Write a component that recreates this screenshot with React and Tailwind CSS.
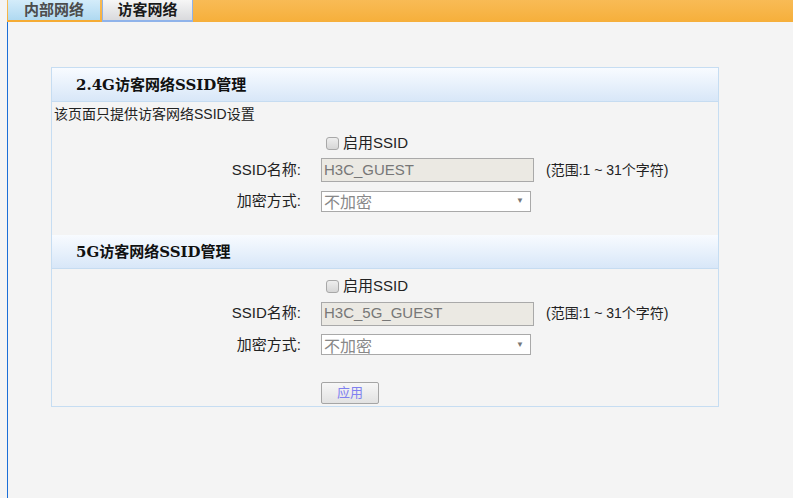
import React from "react";

const sans = { fontFamily: '"Liberation Sans", "Noto Sans CJK SC", sans-serif' };

function Header({ title }) {
  return (
    <div className="h-[34px] flex items-center pl-[24px] pt-[2px] bg-gradient-to-b from-[#f8fbff] to-[#d8e7f8] border-b border-[#c6dcf1]">
      <span
        className="text-[15px] font-bold text-[#111]"
        style={{ fontFamily: '"DejaVu Serif", "Noto Sans CJK SC", serif' }}
      >
        {title}
      </span>
    </div>
  );
}

function Checkbox() {
  return (
    <div className="flex items-center h-[24px] pl-[274px]">
      <span className="w-[13px] h-[13px] rounded-[3px] border border-[#a8a8a8] bg-gradient-to-b from-[#eeeeee] to-[#d6d6d6]"></span>
      <span className="ml-[4px] text-[15px] text-[#222]">启用SSID</span>
    </div>
  );
}

function Row({ label, children, className = "" }) {
  return (
    <div className={"flex items-center " + className}>
      <div className="w-[250px] text-right text-[15px] text-[#222] pr-[1px]">{label}</div>
      <div className="ml-[19px] flex items-center">{children}</div>
    </div>
  );
}

function SsidInput({ value }) {
  return (
    <>
      <div className="w-[213px] h-[24px] border border-[#a9a9a9] bg-[#ebe9e3] flex items-center pl-[2px] text-[15px] text-[#777]">
        {value}
      </div>
      <span className="ml-[12px] text-[14px] text-[#222]">(范围:1 ~ 31个字符)</span>
    </>
  );
}

function Select() {
  return (
    <div className="w-[210px] h-[21px] border border-[#a9a9a9] bg-white flex items-center pl-[2px] pr-[6px]">
      <span className="text-[16px] leading-none text-[#888] mt-[4px]">不加密</span>
      <span className="ml-auto text-[8px] text-[#777]">▼</span>
    </div>
  );
}

export default function App() {
  return (
    <div className="w-[793px] h-[498px] bg-[#f4f4f4] flex overflow-hidden" style={sans}>
      <div className="w-[7px] shrink-0"></div>
      <div className="flex-1 flex flex-col">
        {/* tab bar */}
        <div className="h-[22px] flex gap-[2px] bg-gradient-to-b from-[#f8bb55] to-[#f6af3a] pl-[1px]">
          <div className="w-[92px] h-[22px] flex items-center justify-center bg-gradient-to-b from-[#d4ecfa] to-[#afd9f1] border-b-2 border-[#f5ab33] text-[15px] font-bold text-[#4d4d4d]">
            内部网络
          </div>
          <div className="w-[91px] h-[22px] flex items-center justify-center bg-gradient-to-b from-[#f6f6f6] to-[#d9dadd] border-x border-b-2 border-[#8fb3ea] text-[15px] font-bold text-[#1a1a1a]">
            访客网络
          </div>
        </div>

        {/* content frame */}
        <div className="flex-1 border-l border-[#1b6fd8] pt-[45px] pl-[43px]">
          <div className="w-[668px] border border-[#c6ddf2]">
            <Header title="2.4G访客网络SSID管理" />
            <div className="h-[24px] flex items-center pl-[2px] text-[14px] text-[#222]">
              该页面只提供访客网络SSID设置
            </div>
            <div className="mt-[5px]">
              <Checkbox />
            </div>
            <Row label="SSID名称:" className="mt-[3px]">
              <SsidInput value="H3C_GUEST" />
            </Row>
            <Row label="加密方式:" className="mt-[8px]">
              <Select />
            </Row>
            <div className="h-[22px]"></div>

            <Header title="5G访客网络SSID管理" />
            <div className="mt-[6px]">
              <Checkbox />
            </div>
            <Row label="SSID名称:" className="mt-[3px]">
              <SsidInput value="H3C_5G_GUEST" />
            </Row>
            <Row label="加密方式:" className="mt-[8px]">
              <Select />
            </Row>
            <div className="mt-[26px] pl-[269px] pb-[2px]">
              <button className="w-[58px] h-[22px] rounded-[2px] border border-[#a5a5a5] bg-gradient-to-b from-[#f7f7f7] to-[#e2e2e2] text-[13px] text-[#8080f0] flex items-center justify-center">
                应用
              </button>
            </div>
          </div>
        </div>
      </div>
    </div>
  );
}
